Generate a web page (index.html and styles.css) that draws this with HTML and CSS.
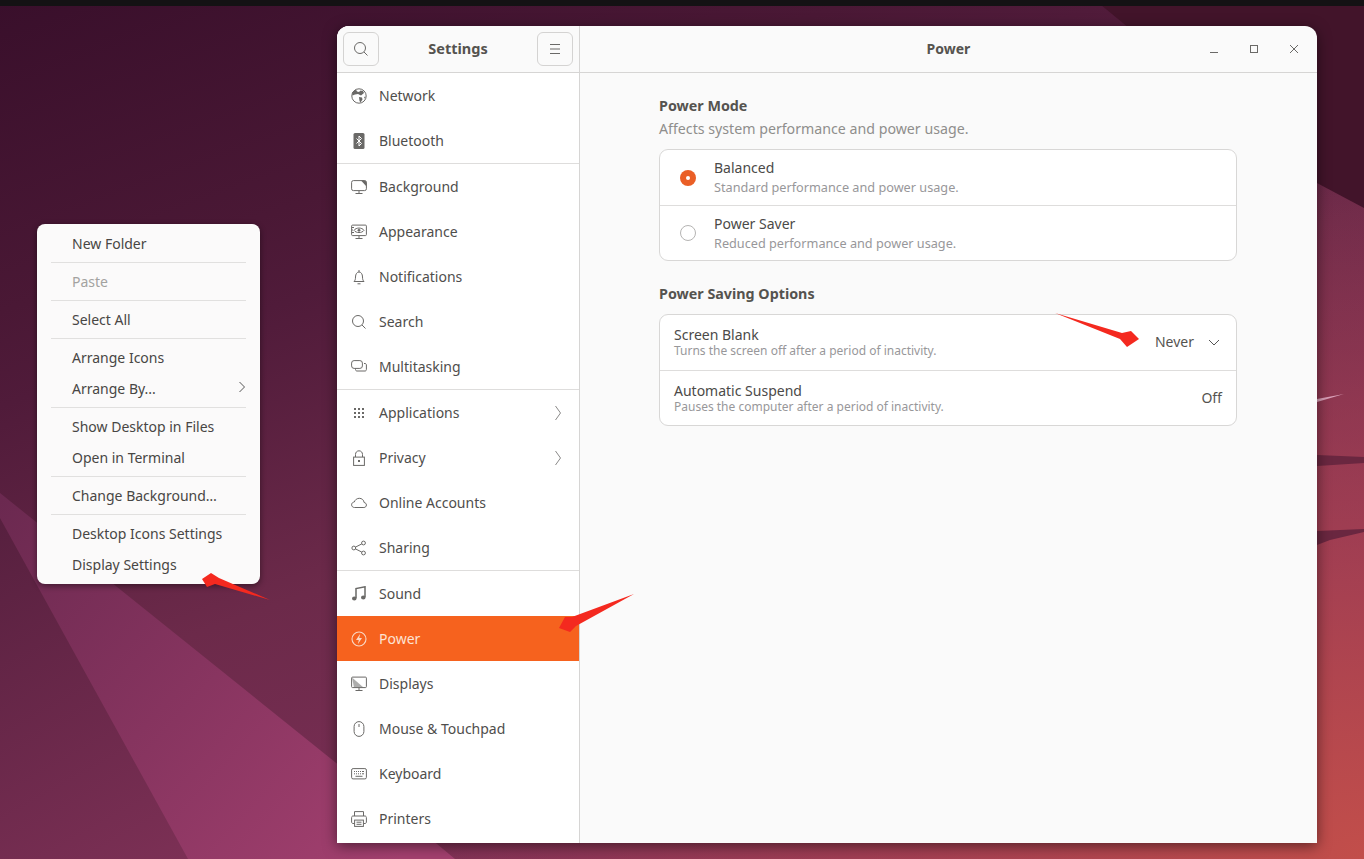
FILE: index.html
```html
<!DOCTYPE html>
<html lang="en">
<head>
<meta charset="utf-8">
<title>Settings - Power</title>
<link rel="stylesheet" href="styles.css">
</head>
<body>
<div class="desktop">
  <svg class="wallpaper" width="1364" height="859" viewBox="0 0 1364 859">
    <defs>
      <linearGradient id="band" gradientUnits="userSpaceOnUse" x1="0" y1="500" x2="400" y2="859">
        <stop offset="0" stop-color="#6b2950"/>
        <stop offset="1" stop-color="#a3406f"/>
      </linearGradient>
      <linearGradient id="low" gradientUnits="userSpaceOnUse" x1="0" y1="520" x2="190" y2="859">
        <stop offset="0" stop-color="#57203f"/>
        <stop offset="1" stop-color="#7c3055"/>
      </linearGradient>
    </defs>
    <polygon points="0,518 188,859 0,859" fill="url(#low)"/>
    <polygon points="0,493 437,844 455,859 188,859 0,518" fill="url(#band)"/>
    <polygon points="1095,0 1317,183 1364,208 1364,0" fill="#42142a"/>
    <polygon points="1317,402 1344,394 1317,399" fill="#d9a0b8"/>
    <polygon points="1317,455 1364,457 1364,463 1317,466" fill="#6a2740"/>
    <polygon points="1317,531 1364,529 1364,532 1330,540 1317,545" fill="#6a2740"/>
  </svg>
  <div class="topbar"></div>

  <nav class="menu">
    <div class="menu-item">New Folder</div>
    <hr class="menu-sep">
    <div class="menu-item disabled">Paste</div>
    <hr class="menu-sep">
    <div class="menu-item">Select All</div>
    <hr class="menu-sep">
    <div class="menu-item">Arrange Icons</div>
    <div class="menu-item">Arrange By...
      <svg class="menu-chev" viewBox="0 0 8 12" width="8" height="12"><path d="M1.500 1l5 5-5 5" fill="none" stroke="#555" stroke-width="1"/></svg>
    </div>
    <hr class="menu-sep">
    <div class="menu-item">Show Desktop in Files</div>
    <div class="menu-item">Open in Terminal</div>
    <hr class="menu-sep">
    <div class="menu-item">Change Background…</div>
    <hr class="menu-sep">
    <div class="menu-item">Desktop Icons Settings</div>
    <div class="menu-item">Display Settings</div>
  </nav>

  <main class="window">
    <aside class="sidebar">
      <header class="side-head">
        <button class="head-btn" aria-label="Search">
          <svg viewBox="0 0 16 16" width="16" height="16"><circle cx="7" cy="7" r="5.5" class="st"/><path d="M11 11l3.500 3.500" class="st"/></svg>
        </button>
        <span class="head-title">Settings</span>
        <button class="head-btn" aria-label="Menu">
          <svg viewBox="0 0 16 16" width="16" height="16"><path d="M3 3.500h10M3 8h10M3 12.500h10" class="st"/></svg>
        </button>
      </header>
      <ul class="nav">
        <li class="row">
          <svg class="ico" viewBox="0 0 16 16"><circle cx="8" cy="8" r="7.200" class="st"/><path d="M5 1.500l1 2 2 .5 1.500-1.500 2.500.5 1 2-3 2.500-3-1.500-3 .5-2.500 1-.5-3zM8 9l3 .5.5 2-2 3-1-1.500zM13 9l1.500-.5-.5 2.500z" class="fl"/></svg>
          <span>Network</span>
        </li>
        <li class="row sep">
          <svg class="ico" viewBox="0 0 16 16"><rect x="2.500" y="0" width="11" height="16" rx="1.500" class="fl"/><path d="M5.500 5.500l5 5-2.500 2.500v-10l2.500 2.500-5 5" fill="none" stroke="#fff" stroke-width="1"/></svg>
          <span>Bluetooth</span>
        </li>
        <li class="row">
          <svg class="ico" viewBox="0 0 16 16"><rect x=".6" y="1.600" width="14.800" height="10" rx="1.800" class="st"/><path d="M10 1.500h4l1.500 1.500v4.500z" class="fl"/><path d="M8 12v2M4.500 14.500h7" class="st"/></svg>
          <span>Background</span>
        </li>
        <li class="row">
          <svg class="ico" viewBox="0 0 16 16"><rect x=".6" y="1.100" width="14.800" height="10.500" rx="1" class="st"/><path d="M3 6.300c2-3 8-3 10 0-2 3-8 3-10 0z" class="st"/><circle cx="8" cy="6.300" r="1.400" class="fl"/><path d="M1 3.500h2M1 6h1M1 8.500h2M8 12v2M4.500 14.500h7" class="st"/></svg>
          <span>Appearance</span>
        </li>
        <li class="row">
          <svg class="ico" viewBox="0 0 16 16"><path d="M3 12.500c1-1 1.500-2 1.500-4.500 0-3 1.500-5 3.500-5s3.500 2 3.500 5c0 2.500.5 3.500 1.500 4.500z" class="st"/><path d="M6.500 14.800h3" class="st"/><path d="M8 1v2" class="st"/></svg>
          <span>Notifications</span>
        </li>
        <li class="row">
          <svg class="ico" viewBox="0 0 16 16"><circle cx="7" cy="7" r="5.500" class="st"/><path d="M11 11l3.500 3.500" class="st"/></svg>
          <span>Search</span>
        </li>
        <li class="row sep">
          <svg class="ico" viewBox="0 0 16 16"><rect x=".6" y="1.600" width="10.800" height="7.800" rx="2.500" class="st"/><path d="M13 4.500h1c.8 0 1.400.6 1.400 1.500v4.500c0 1-.6 1.500-1.400 1.500h-8c-.8 0-1.500-.5-1.500-1.500v-1" class="st"/></svg>
          <span>Multitasking</span>
        </li>
        <li class="row">
          <svg class="ico" viewBox="0 0 16 16"><path d="M3 3h2v2H3zM7 3h2v2H7zM11 3h2v2h-2zM3 7h2v2H3zM7 7h2v2H7zM11 7h2v2h-2zM3 11h2v2H3zM7 11h2v2H7zM11 11h2v2h-2z" class="fl"/></svg>
          <span>Applications</span>
          <svg class="chev" viewBox="0 0 8 16" width="8" height="16"><path d="M1.500 1l5 7-5 7" fill="none" stroke="#8a8988" stroke-width="1"/></svg>
        </li>
        <li class="row">
          <svg class="ico" viewBox="0 0 16 16"><rect x="2.600" y="7.100" width="10.800" height="8.300" class="st"/><path d="M4.500 7V4.500C4.500 2.300 6 .8 8 .8s3.500 1.500 3.500 3.700V7" class="st"/><rect x="7" y="10" width="2" height="2" class="fl"/></svg>
          <span>Privacy</span>
          <svg class="chev" viewBox="0 0 8 16" width="8" height="16"><path d="M1.500 1l5 7-5 7" fill="none" stroke="#8a8988" stroke-width="1"/></svg>
        </li>
        <li class="row">
          <svg class="ico" viewBox="0 0 16 16"><path d="M3.500 12.500C1.800 12.500.6 11.300.6 9.800c0-1.600 1.200-2.700 2.700-2.800C4 4.800 6 3.300 8.300 3.300c2.600 0 4.600 1.800 4.800 4.200 1.400.2 2.300 1.200 2.300 2.500 0 1.500-1.100 2.500-2.500 2.500z" class="st"/></svg>
          <span>Online Accounts</span>
        </li>
        <li class="row sep">
          <svg class="ico" viewBox="0 0 16 16"><circle cx="2.800" cy="8" r="1.900" class="st"/><circle cx="12.500" cy="3" r="1.900" class="st"/><circle cx="12.500" cy="13" r="1.900" class="st"/><path d="M4.500 7.100l6.300-3.200M4.500 8.900l6.300 3.200" class="st"/></svg>
          <span>Sharing</span>
        </li>
        <li class="row">
          <svg class="ico" viewBox="0 0 16 16"><path d="M5 12V2.500l9-1.700V11" fill="none" stroke="#6a6967" stroke-width="1.500"/><ellipse cx="3.300" cy="12.500" rx="2.300" ry="2" class="fl"/><ellipse cx="12.300" cy="11.500" rx="2.300" ry="2" class="fl"/></svg>
          <span>Sound</span>
        </li>
        <li class="row active">
          <svg class="ico" viewBox="0 0 16 16"><circle cx="8" cy="8" r="7" fill="none" stroke="#f9d9c6" stroke-width="1.100"/><path d="M9.200 2.800L5 9h2.800l-1 4.200L11 7H8.200z" fill="#f9d9c6"/></svg>
          <span>Power</span>
        </li>
        <li class="row">
          <svg class="ico" viewBox="0 0 16 16"><rect x=".6" y="1.100" width="14.800" height="10.500" rx="1" class="st"/><path d="M1 1.500l11.500 10H3z" class="fl" opacity=".55"/><path d="M8 12v2M4.500 14.500h7" class="st"/></svg>
          <span>Displays</span>
        </li>
        <li class="row">
          <svg class="ico" viewBox="0 0 16 16"><rect x="3.100" y=".6" width="9.800" height="14.800" rx="4.900" class="st"/><path d="M8 3v3" class="st"/></svg>
          <span>Mouse &amp; Touchpad</span>
        </li>
        <li class="row">
          <svg class="ico" viewBox="0 0 16 16"><rect x=".6" y="2.600" width="14.800" height="10.300" rx="1.500" class="st"/><path d="M3 5.500h1M5 5.500h1M7 5.500h1M9 5.500h1M11 5.500h2M3 7.800h1M5 7.800h1M7 7.800h1M9 7.800h1M11 7.800h2M4.500 10.300h7" class="st"/></svg>
          <span>Keyboard</span>
        </li>
        <li class="row">
          <svg class="ico" viewBox="0 0 16 16"><path d="M3.500 5V.6h9V5M3.500 12.500H2c-.8 0-1.400-.6-1.400-1.500V6.500C.6 5.600 1.200 5 2 5h12c.8 0 1.400.6 1.400 1.500V11c0 .9-.6 1.500-1.400 1.500h-1.500" class="st"/><rect x="3.600" y="9.100" width="8.800" height="6.300" class="st"/><path d="M5.500 11.200h5M5.500 13.300h5" class="st"/></svg>
          <span>Printers</span>
        </li>
      </ul>
    </aside>
    <section class="pane">
      <header class="pane-head">
        <span class="pane-title">Power</span>
        <div class="win-btns">
          <svg viewBox="0 0 16 16" width="16" height="16"><path d="M4 11.500h8" class="st"/></svg>
          <svg viewBox="0 0 16 16" width="16" height="16"><rect x="4.500" y="4.500" width="7" height="7" class="st"/></svg>
          <svg viewBox="0 0 16 16" width="16" height="16"><path d="M4 4l8 8M12 4l-8 8" class="st"/></svg>
        </div>
      </header>
      <div class="content">
        <div class="group">
          <h2 class="group-title">Power Mode</h2>
          <p class="group-sub">Affects system performance and power usage.</p>
          <div class="list">
            <div class="opt">
              <span class="radio on"></span>
              <div class="texts">
                <div class="t1">Balanced</div>
                <div class="t2">Standard performance and power usage.</div>
              </div>
            </div>
            <div class="opt">
              <span class="radio"></span>
              <div class="texts">
                <div class="t1">Power Saver</div>
                <div class="t2">Reduced performance and power usage.</div>
              </div>
            </div>
          </div>
        </div>
        <div class="group">
          <h2 class="group-title">Power Saving Options</h2>
          <div class="list">
            <div class="setting">
              <div class="texts tight">
                <div class="t1">Screen Blank</div>
                <div class="t2">Turns the screen off after a period of inactivity.</div>
              </div>
              <span class="val">Never</span>
              <svg class="dd" viewBox="0 0 12 12" width="12" height="12"><path d="M1 4l5 5 5-5" fill="none" stroke="#555" stroke-width="1"/></svg>
            </div>
            <div class="setting">
              <div class="texts tight">
                <div class="t1">Automatic Suspend</div>
                <div class="t2">Pauses the computer after a period of inactivity.</div>
              </div>
              <span class="val">Off</span>
            </div>
          </div>
        </div>
      </div>
    </section>
  </main>

  <svg class="annot" width="1364" height="859" viewBox="0 0 1364 859">
    <polygon points="270,600 219,578 211,573 202,579 207,587 215,584" fill="#f4291f"/>
    <polygon points="634,594 572,617 565,617 559,628 570,632 576,626" fill="#f4291f"/>
    <polygon points="1055,313 1122,333 1131,331 1139,339 1127,347 1120,339" fill="#f4291f"/>
  </svg>
</div>
</body>
</html>
```
FILE: styles.css
```css
* { box-sizing: border-box; }
html, body { margin: 0; padding: 0; }
body {
  font-family: "Noto Sans", "Liberation Sans", sans-serif;
  font-size: 14px;
  color: #4b4a48;
  overflow: hidden;
}
.desktop {
  position: relative;
  width: 1364px;
  height: 859px;
  overflow: hidden;
  background:
    radial-gradient(1000px 700px at 1364px 859px, #c24e4a 0%, rgba(176,68,80,.7) 45%, rgba(120,40,80,0) 100%),
    linear-gradient(160deg, #390f2b 0%, #4a1835 23%, #501b3a 30%, #6c2a4a 52%, #7e3058 79%, #8f3658 100%);
}
.wallpaper, .annot { position: absolute; left: 0; top: 0; }
.annot { pointer-events: none; }
.topbar { position: absolute; left: 0; top: 0; width: 100%; height: 6px; background: #141214; }

.st { fill: none; stroke: #6a6967; stroke-width: 1; }
.fl { fill: #6a6967; }

/* context menu */
.menu {
  position: absolute;
  left: 37px;
  top: 224px;
  width: 223px;
  padding: 4px 14px;
  background: #fbfafa;
  border-radius: 8px;
  box-shadow: 0 2px 6px rgba(0,0,0,.45);
}
.menu-item {
  position: relative;
  height: 31px;
  line-height: 31px;
  padding-left: 21px;
  color: #484644;
  white-space: nowrap;
}
.menu-item.disabled { color: #a3a2a0; }
.menu-sep { height: 1px; margin: 3px 0; border: 0; background: #e1e0df; }
.menu-chev { position: absolute; right: 0; top: 8px; }

/* window */
.window {
  position: absolute;
  left: 337px;
  top: 26px;
  width: 980px;
  height: 817px;
  display: flex;
  border-radius: 12px 12px 0 0;
  overflow: hidden;
  box-shadow: 0 3px 14px rgba(0,0,0,.5);
  background: #fafafa;
}
.sidebar {
  width: 243px;
  flex: none;
  background: #fff;
  border-right: 1px solid #d6d5d4;
  display: flex;
  flex-direction: column;
}
.side-head {
  height: 47px;
  flex: none;
  display: flex;
  align-items: center;
  justify-content: space-between;
  padding: 0 6px;
  background: #fafafa;
  border-bottom: 1px solid #d6d5d4;
}
.head-btn {
  width: 36px;
  height: 34px;
  padding: 0;
  display: flex;
  align-items: center;
  justify-content: center;
  background: #fafafa;
  border: 1px solid #d4d3d2;
  border-radius: 6px;
}
.head-title { font-size: 14.500px; font-weight: 700; color: #55534f; padding-bottom: 2px; }
.nav { list-style: none; margin: 0; padding: 0; }
.row {
  height: 45px;
  display: flex;
  align-items: center;
  padding: 0 14px;
  gap: 12px;
  color: #4f4e4c;
}
.row.sep { height: 46px; border-bottom: 1px solid #dedddc; }
.row .ico { width: 16px; height: 16px; flex: none; }
.row .chev { margin-left: auto; margin-right: 3px; }
.row.active { background: #f6621e; color: #fde3d4; }

.pane { flex: 1; display: flex; flex-direction: column; min-width: 0; }
.pane-head {
  height: 47px;
  flex: none;
  position: relative;
  display: flex;
  align-items: center;
  justify-content: center;
  border-bottom: 1px solid #d6d5d4;
}
.pane-title { font-weight: 700; color: #55534f; padding-bottom: 2px; }
.win-btns {
  position: absolute;
  right: 15px;
  top: 15px;
  display: flex;
  gap: 24px;
}
.content {
  width: 578px;
  margin-left: 79px;
  padding-top: 23px;
  display: flex;
  flex-direction: column;
  gap: 23px;
}
.group-title { margin: 0; font-size: 14.300px; line-height: 20px; font-weight: 700; color: #55534f; }
.group-sub { margin: 3px 0 0; font-size: 14.200px; line-height: 20px; color: #8f8e8c; }
.group-title + .list { margin-top: 10px; }
.group-sub + .list { margin-top: 10px; }
.list {
  background: #fff;
  border: 1px solid #d8d7d6;
  border-radius: 9px;
  overflow: hidden;
}
.opt, .setting {
  height: 55px;
  display: flex;
  align-items: center;
  padding: 0 14px;
}
.opt + .opt, .setting + .setting { border-top: 1px solid #dedddc; }
.setting:first-child { padding-bottom: 2px; }
.setting + .setting .val { margin-bottom: 2px; }
.radio {
  width: 16px;
  height: 16px;
  margin-left: 6px;
  margin-right: 18px;
  border-radius: 50%;
  border: 1px solid #b5b4b3;
  background: #fff;
  position: relative;
  flex: none;
}
.radio.on {
  border: 0;
  background: #ea5f26;
}
.radio.on::after {
  content: "";
  position: absolute;
  left: 6px;
  top: 6px;
  width: 4px;
  height: 4px;
  border-radius: 50%;
  background: #fff;
}
.t1 { line-height: 20px; color: #4b4a48; }
.t2 { font-size: 12.700px; line-height: 19px; color: #98979a; }
.texts.tight .t1 { line-height: 18px; }
.texts.tight .t2 { font-size: 12px; line-height: 14px; }
.val { margin-left: auto; color: #55534f; }
.dd { margin-left: 14px; margin-right: 2px; }
```
